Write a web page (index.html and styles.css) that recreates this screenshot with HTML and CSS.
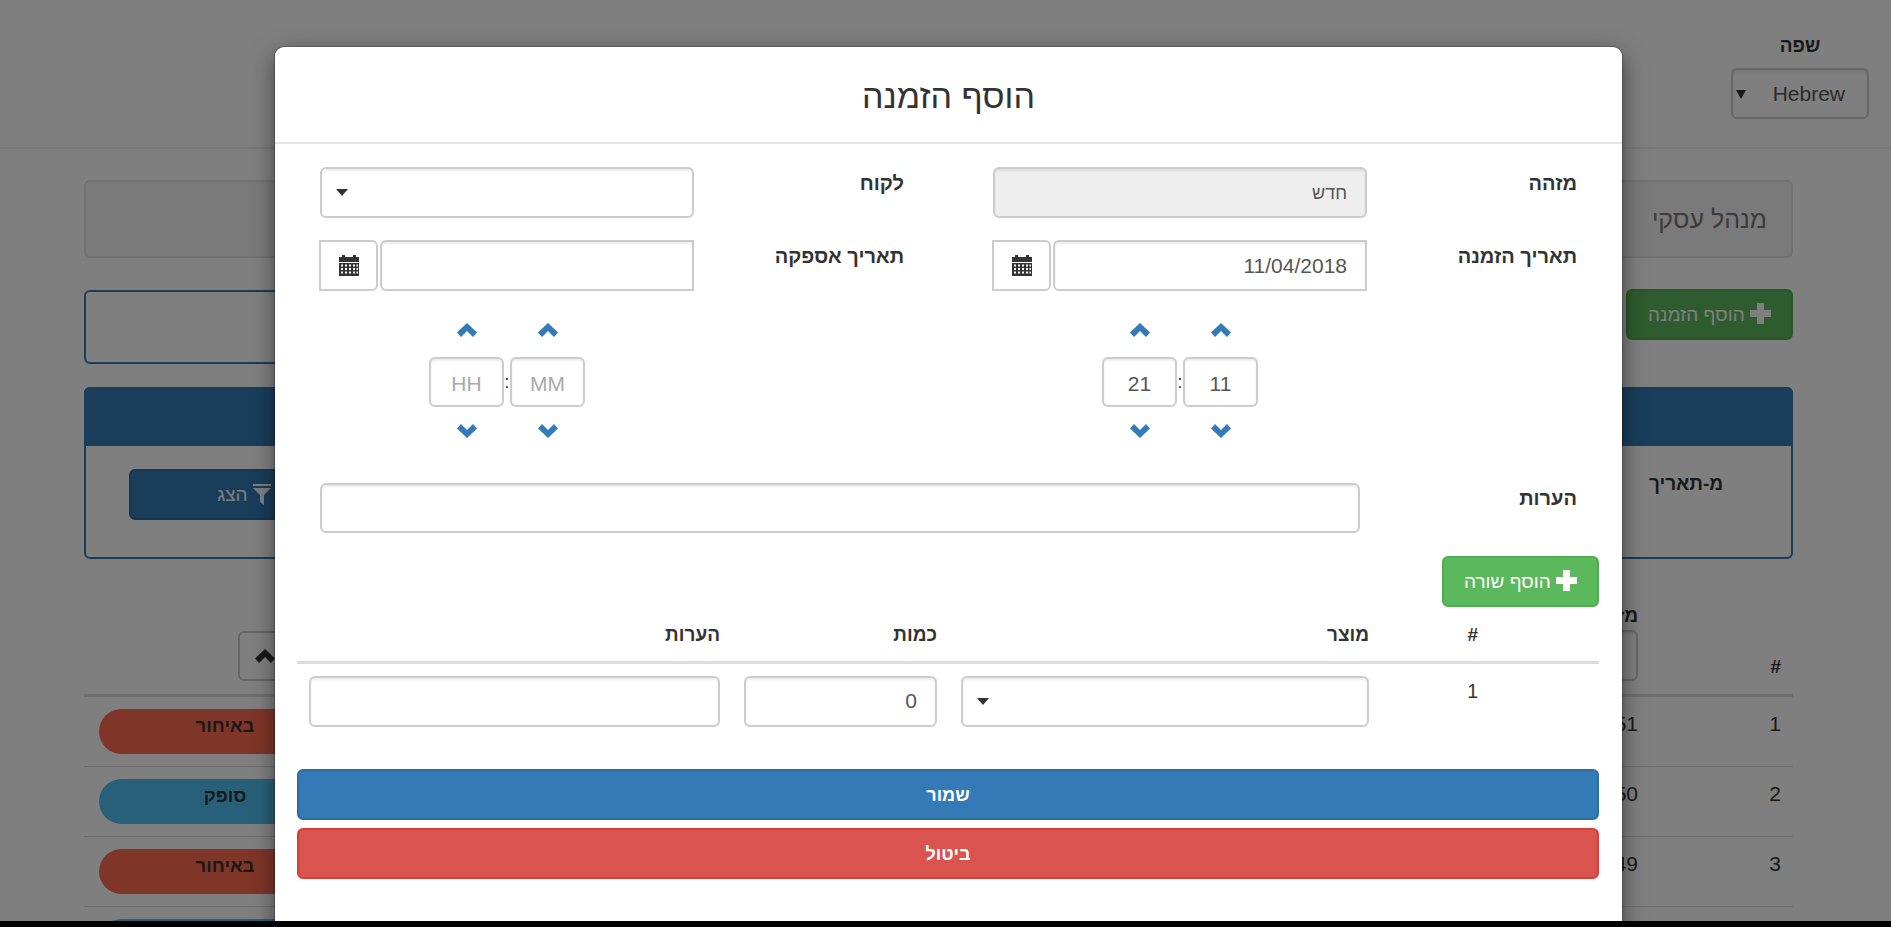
FILE: index.html
```html
<!DOCTYPE html>
<html lang="he" dir="rtl">
<head>
    <meta charset="UTF-8">
    <meta name="viewport" content="width=device-width, initial-scale=1.0">
    <title>הזמנות</title>
    <link rel="stylesheet" href="styles.css">
</head>
<body>
    <svg class="icon-defs" width="0" height="0">
        <symbol id="chevron-up" viewBox="0 0 20 14"><polygon points="10,0 20,9.500 16,14 10,8 4,14 0,9.500"/></symbol>
        <symbol id="chevron-down" viewBox="0 0 20 14"><polygon points="10,14 20,4.500 16,0 10,6 4,0 0,4.500"/></symbol>
        <symbol id="plus" viewBox="0 0 21 21"><polygon points="7,0 14,0 14,7 21,7 21,14 14,14 14,21 7,21 7,14 0,14 0,7 7,7"/></symbol>
        <symbol id="funnel" viewBox="0 0 18 21"><rect x="0" y="0" width="18" height="2"/><polygon points="0,4 18,4 11,11 11,21 7,18 7,11"/></symbol>
        <symbol id="calendar" viewBox="0 0 20 21">
            <rect x="3" y="0" width="3" height="3"/>
            <rect x="14" y="0" width="3" height="3"/>
            <rect x="0" y="2" width="20" height="5"/>
            <path fill-rule="evenodd" d="M0 8h20v13H0z M2 9.500h2v2H2z M6 9.500h2v2H6z M10 9.500h2v2h-2z M14 9.500h2v2h-2z M17.500 9.500h1.500v2h-1.500z M2 13h2v2H2z M6 13h2v2H6z M10 13h2v2h-2z M14 13h2v2h-2z M17.500 13h1.500v2h-1.500z M2 16.500h2v2H2z M6 16.500h2v2H6z M10 16.500h2v2h-2z M14 16.500h2v2h-2z M17.500 16.500h1.500v2h-1.500z"/>
        </symbol>
    </svg>

    <div class="page">
        <header class="topbar">
            <div class="lang">
                <label class="lang-label">שפה</label>
                <div class="select-wrap lang-select">
                    <select class="control"><option>Hebrew</option></select>
                </div>
            </div>
        </header>

        <main class="content">
            <div class="page-title">מנהל עסקי</div>

            <div class="toolbar">
                <button class="btn btn-green btn-add-order"><svg class="icon-plus"><use href="#plus"/></svg> הוסף הזמנה</button>
                <div class="search-box"></div>
            </div>

            <section class="filter-panel">
                <div class="filter-head"></div>
                <div class="filter-body">
                    <label class="filter-label">מ-תאריך</label>
                    <button class="btn btn-blue btn-filter"><svg class="icon-funnel"><use href="#funnel"/></svg> הצג</button>
                </div>
            </section>

            <table class="orders">
                <colgroup><col class="c-num"><col class="c-id"><col><col class="c-status"></colgroup>
                <thead>
                    <tr>
                        <th class="th-num">#</th>
                        <th class="th-id">
                            <div class="th-id-label">מזהה</div>
                            <input class="control" type="text">
                        </th>
                        <th></th>
                        <th class="th-status"><button class="btn-sort"><svg class="icon-sort"><use href="#chevron-up"/></svg></button></th>
                    </tr>
                </thead>
                <tbody>
                    <tr><td>1</td><td>151</td><td></td><td><div class="pill pill-late">באיחור</div></td></tr>
                    <tr><td>2</td><td>150</td><td></td><td><div class="pill pill-done">סופק</div></td></tr>
                    <tr><td>3</td><td>149</td><td></td><td><div class="pill pill-late">באיחור</div></td></tr>
                    <tr><td></td><td></td><td></td><td><div class="pill pill-done"></div></td></tr>
                </tbody>
            </table>
        </main>

        <div class="backdrop"></div>

        <div class="modal">
            <div class="modal-head">
                <h3 class="modal-title">הוסף הזמנה</h3>
            </div>

            <div class="modal-form">
                <label class="form-label">מזהה</label>
                <input class="control control-readonly" type="text" value="חדש" readonly>
                <span></span>
                <label class="form-label">לקוח</label>
                <div class="select-wrap"><select class="control"><option></option></select></div>

                <label class="form-label">תאריך הזמנה</label>
                <div class="date-group">
                    <input class="control" type="text" value="11/04/2018">
                    <span class="date-addon"><svg class="icon-calendar"><use href="#calendar"/></svg></span>
                </div>
                <span></span>
                <label class="form-label">תאריך אספקה</label>
                <div class="date-group">
                    <input class="control" type="text">
                    <span class="date-addon"><svg class="icon-calendar"><use href="#calendar"/></svg></span>
                </div>

                <span></span>
                <div class="timepicker">
                    <svg class="icon-chevron"><use href="#chevron-up"/></svg><span></span><svg class="icon-chevron"><use href="#chevron-up"/></svg>
                    <input class="control time-input" type="text" value="21"><span class="time-sep">:</span><input class="control time-input" type="text" value="11">
                    <svg class="icon-chevron"><use href="#chevron-down"/></svg><span></span><svg class="icon-chevron"><use href="#chevron-down"/></svg>
                </div>
                <span></span>
                <span></span>
                <div class="timepicker">
                    <svg class="icon-chevron"><use href="#chevron-up"/></svg><span></span><svg class="icon-chevron"><use href="#chevron-up"/></svg>
                    <input class="control time-input" type="text" placeholder="HH"><span class="time-sep">:</span><input class="control time-input" type="text" placeholder="MM">
                    <svg class="icon-chevron"><use href="#chevron-down"/></svg><span></span><svg class="icon-chevron"><use href="#chevron-down"/></svg>
                </div>

                <label class="form-label notes-label">הערות</label>
                <input class="control notes-input" type="text">
            </div>

            <div class="modal-lines">
                <button class="btn btn-green btn-add-row"><svg class="icon-plus"><use href="#plus"/></svg> הוסף שורה</button>

                <table class="lines">
                    <colgroup><col class="l-num"><col class="l-product"><col class="l-qty"><col></colgroup>
                    <thead>
                        <tr><th class="l-index">#</th><th>מוצר</th><th>כמות</th><th>הערות</th></tr>
                    </thead>
                    <tbody>
                        <tr>
                            <td class="l-index">1</td>
                            <td><div class="select-wrap"><select class="control"><option></option></select></div></td>
                            <td><input class="control" type="text" value="0"></td>
                            <td><input class="control" type="text"></td>
                        </tr>
                    </tbody>
                </table>

                <button class="btn btn-blue btn-wide">שמור</button>
                <button class="btn btn-red btn-wide">ביטול</button>
            </div>
        </div>
    </div>
    <div class="bottom-bar"></div>
</body>
</html>
```

FILE: styles.css
```css
* { box-sizing: border-box; }
html, body { margin: 0; height: 927px; overflow: hidden; }
body { font-family: "Liberation Sans", Arial, sans-serif; font-size: 21px; color: #333; background: #000; }
.icon-defs { position: absolute; }

.page { position: relative; height: 921px; overflow: hidden; background: #fff; }
.bottom-bar { height: 6px; background: #000; }

/* form controls */
.control { display: block; width: 100%; height: 51px; padding: 0 18px; font: inherit; color: #555; background: #fff; border: 2px solid #ccc; border-radius: 6px; box-shadow: inset 0 2px 2px rgba(0,0,0,.075); outline: none; }
.control::placeholder { color: #aaa; }
.control-readonly { background: #eee; font-size: 18px; padding-top: 2px; }
select.control { appearance: none; -webkit-appearance: none; }
.select-wrap { position: relative; }
.select-wrap::after { content: ""; position: absolute; left: 16px; top: 22px; border: 6px solid transparent; border-top: 7px solid #333; border-bottom: 0; }

.btn { display: block; height: 51px; font: inherit; font-size: 19px; border: 2px solid; border-radius: 6px; color: #fff; }
.btn-green { background: #5cb85c; border-color: #4cae4c; }
.btn-blue { background: #337ab7; border-color: #2e6da4; }
.btn-red { background: #d9534f; border-color: #d43f3a; }
.icon-plus { width: 21px; height: 21px; fill: #fff; vertical-align: -3px; }

/* page behind the dialog */
.topbar { height: 149px; border-bottom: 2px solid #eee; display: flex; padding: 33px 22px 0 0; }
.lang { width: 138px; text-align: center; }
.lang-label { display: block; font-weight: bold; font-size: 19px; height: 35px; line-height: 26px; }
.lang-select select { padding: 0 22px 0 0; }
.lang-select::after { left: 5px; top: 22px; border-width: 5px; border-top-width: 9px; }

.content { padding: 31px 98px 0 84px; }
.page-title { height: 78px; line-height: 74px; padding-right: 24px; font-size: 25px; color: #777; background: #f5f5f5; border: 2px solid #e3e3e3; border-radius: 6px; }
.toolbar { display: flex; align-items: flex-start; gap: 16px; margin-top: 31px; }
.btn-add-order { width: 167px; flex: none; padding: 0; }
.search-box { flex: 1; height: 74px; margin-top: 1px; border: 2px solid #337ab7; border-radius: 6px; }

.filter-panel { height: 172px; margin-top: 23px; border: 2px solid #337ab7; border-radius: 6px; }
.filter-head { height: 59px; margin: -2px -2px 0; background: #337ab7; border-radius: 6px 6px 0 0; }
.filter-body { display: flex; justify-content: space-between; align-items: flex-start; padding: 23px 68px 0 43px; }
.filter-label { font-weight: bold; font-size: 19px; line-height: 30px; }
.btn-filter { width: 230px; }
.icon-funnel { width: 18px; height: 21px; fill: #fff; vertical-align: -4px; }

.orders { width: 100%; table-layout: fixed; border-collapse: collapse; }
.c-num { width: 143px; }
.c-id { width: 300px; }
.c-status { width: 300px; }
.orders thead th { height: 136px; vertical-align: bottom; text-align: right; padding: 0 12px 13px; border-bottom: 3px solid #ddd; font-size: 19px; }
.orders thead .th-num { padding-bottom: 17px; line-height: 20px; }
.th-id-label { line-height: 26px; }
.th-id .control { margin-top: 1px; }
.th-status { padding: 0 0 13px !important; }
.btn-sort { display: flex; align-items: center; justify-content: center; width: 54px; height: 50px; padding: 0; margin-left: 154px; margin-right: auto; background: #fff; border: 2px solid #ccc; border-radius: 6px; }
.icon-sort { width: 20px; height: 14px; fill: #333; }
.orders tbody td { height: 70px; padding: 12px; vertical-align: top; line-height: 30px; font-size: 21px; border-bottom: 1px solid #ddd; }
.pill { width: 252px; height: 45px; margin-right: 21px; padding-top: 2px; line-height: 30px; font-size: 18.500px; font-weight: bold; text-align: center; border-radius: 23px; }
.pill-late { background: #ff6a50; }
.pill-done { background: #50c0f4; }

.backdrop { position: absolute; inset: 0; background: rgba(0,0,0,.5); }

/* dialog */
.modal { position: absolute; left: 275px; top: 47px; width: 1347px; height: 900px; background: #fff; border-radius: 9px 9px 0 0; box-shadow: 0 0 0 1px rgba(0,0,0,.2), 0 7px 22px rgba(0,0,0,.5); }
.modal-head { height: 97px; border-bottom: 2px solid #e5e5e5; display: flex; align-items: center; justify-content: center; }
.modal-title { margin: 3px 0 0; font-size: 34px; font-weight: normal; }

.modal-form { display: grid; grid-template-columns: 209px 374px 90px 209px 374px; align-items: start; row-gap: 22px; padding: 23px 46px 0 45px; }
.form-label { margin-right: -1px; font-weight: bold; font-size: 20px; line-height: 32px; }
.date-group { display: flex; gap: 2px; margin-left: -1px; }
.date-group .control { flex: 1; border-radius: 6px 0 0 6px; }
.date-addon { flex: none; width: 59px; height: 51px; display: flex; align-items: center; justify-content: center; border: 2px solid #ccc; border-radius: 0 6px 6px 0; }
.icon-calendar { width: 20px; height: 21px; fill: #333; }

.timepicker { direction: ltr; display: grid; grid-template-columns: 75px 6px 75px; grid-template-rows: 54px 50px 48px; justify-content: center; justify-items: center; align-items: center; margin: -10px 0 6px; }
.icon-chevron { width: 20px; height: 14px; fill: #337ab7; }
.time-input { height: 50px; padding: 3px 0 0; text-align: center; }
.time-sep { font-size: 19px; line-height: 50px; }

.notes-label { grid-column: 1; line-height: 30px; }
.notes-input { grid-column: 2 / -1; width: 1040px; height: 50px; margin-right: 7px; }

.modal-lines { padding: 23px 23px 0 22px; }
.btn-add-row { width: 157px; padding: 0; }
.lines { width: 100%; table-layout: fixed; border-collapse: collapse; }
.l-num { width: 218px; }
.l-product { width: 432px; }
.l-qty { width: 217px; }
.lines th { height: 55px; padding: 0 12px 12px; vertical-align: bottom; text-align: right; font-size: 19px; line-height: 28px; border-bottom: 3px solid #ddd; }
.lines td { padding: 12px 12px 0; vertical-align: top; }
.lines .l-index { padding-right: 121px; }
.lines td.l-index { line-height: 30px; font-size: 19.500px; }
.btn-wide { width: 100%; padding: 2px 0 0; font-size: 18px; font-weight: bold; }
.lines + .btn-wide { margin-top: 42px; }
.btn-wide + .btn-wide { margin-top: 8px; }
```
